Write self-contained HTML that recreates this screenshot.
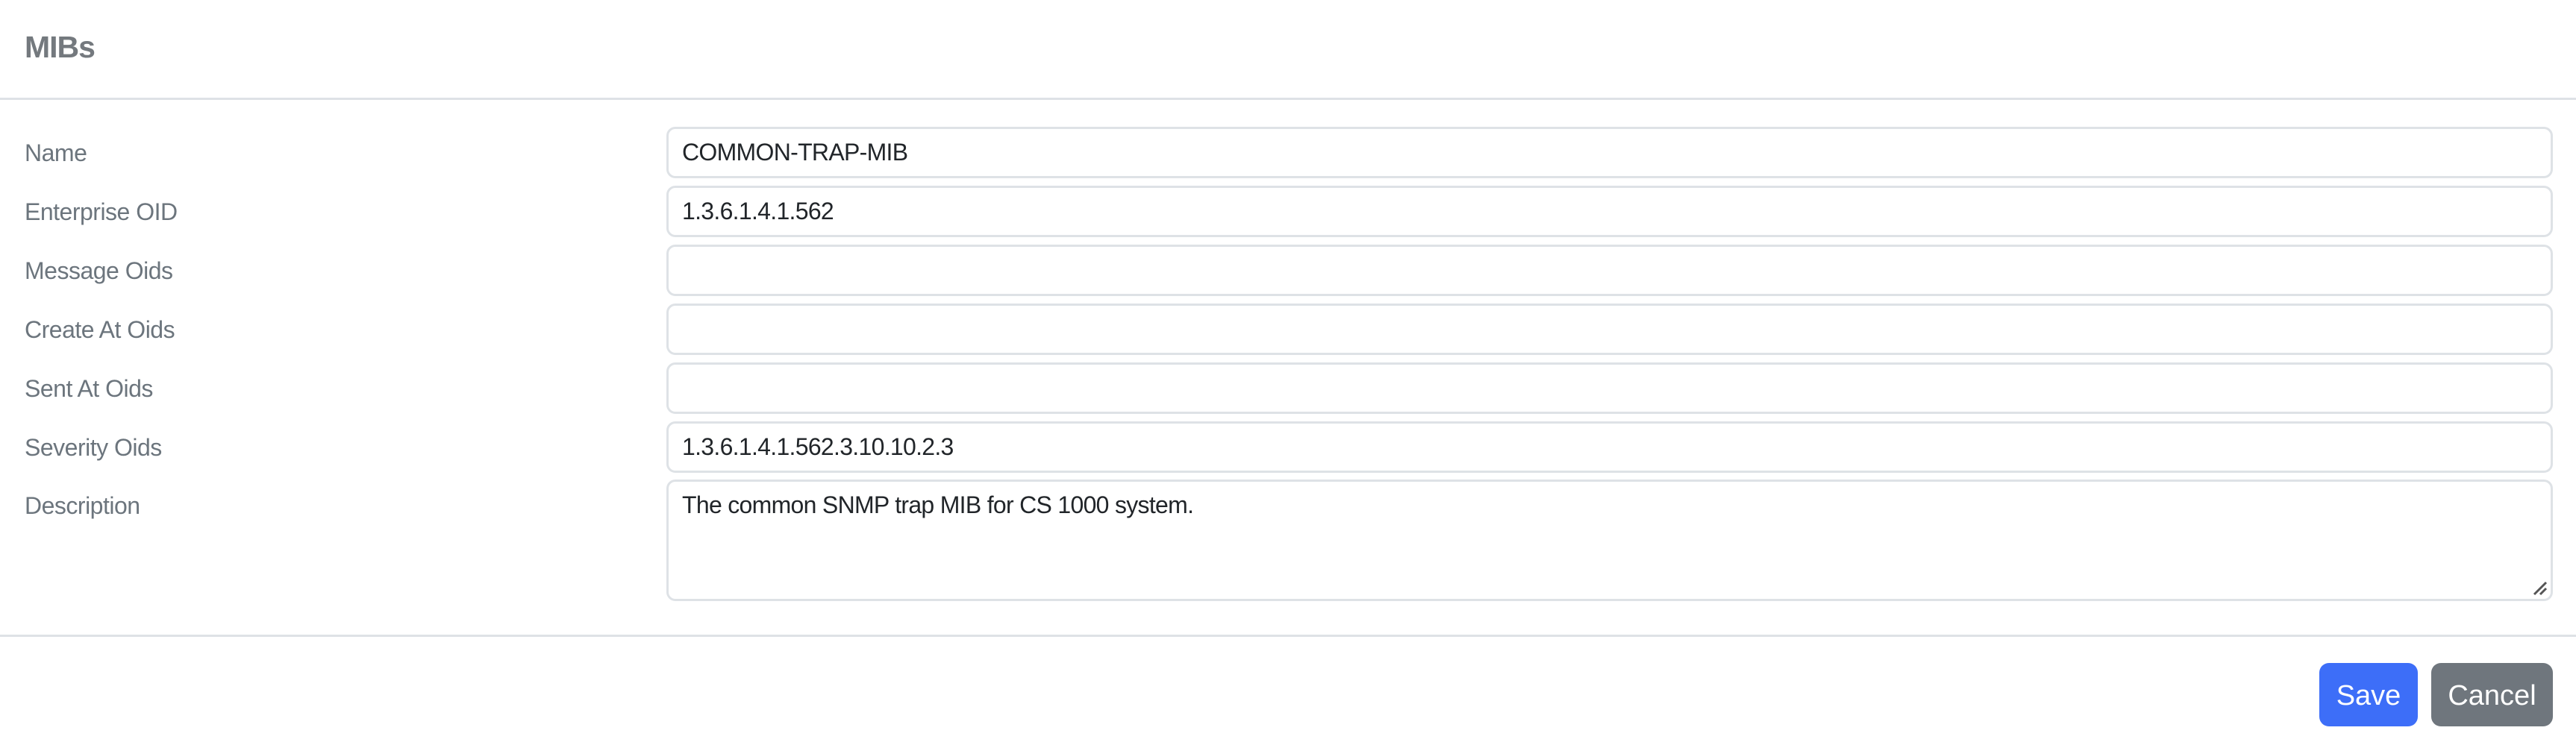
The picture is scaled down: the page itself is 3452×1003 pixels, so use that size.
<!DOCTYPE html>
<html><head><meta charset="utf-8"><style>
html,body{margin:0;padding:0;background:#fff;width:3452px;height:1003px;overflow:hidden;font-family:"Liberation Sans",sans-serif}
.t{position:absolute;left:33px;top:40px;font-size:41px;color:#74797e;font-weight:bold;letter-spacing:-1px}
.hr{position:absolute;left:0;width:3452px;height:3px;background:#dee2e6}
.l{position:absolute;left:33px;font-size:32px;color:#6c757d;letter-spacing:-0.5px}
.i{position:absolute;left:893px;width:2528px;border:3px solid #dee2e6;border-radius:12px;box-sizing:border-box;height:69px;font-size:32px;color:#212529;padding-left:18px;line-height:63px;letter-spacing:-0.7px}
.b{position:absolute;top:889px;height:85px;border-radius:13px;color:#fff;font-size:38px;line-height:89px;text-align:center}
</style></head><body>
<div class="t">MIBs</div>
<div class="hr" style="top:131px"></div>
<div class="l" style="top:187px">Name</div>
<div class="l" style="top:266px">Enterprise OID</div>
<div class="l" style="top:345px">Message Oids</div>
<div class="l" style="top:424px">Create At Oids</div>
<div class="l" style="top:503px">Sent At Oids</div>
<div class="l" style="top:582px">Severity Oids</div>
<div class="l" style="top:660px">Description</div>
<div class="i" style="top:170px">COMMON-TRAP-MIB</div>
<div class="i" style="top:249px">1.3.6.1.4.1.562</div>
<div class="i" style="top:328px"></div>
<div class="i" style="top:407px"></div>
<div class="i" style="top:486px"></div>
<div class="i" style="top:565px">1.3.6.1.4.1.562.3.10.10.2.3</div>
<div class="i" style="top:643px;height:163px;line-height:normal;padding-top:13px">The common SNMP trap MIB for CS 1000 system.
<svg style="position:absolute;right:4px;bottom:4px" width="20" height="20"><path d="M2 18L18 2M10 18L18 10" stroke="#555" stroke-width="3"/></svg></div>
<div class="hr" style="top:851px"></div>
<div class="b" style="left:3108px;width:132px;background:#3d6ef8">Save</div>
<div class="b" style="left:3258px;width:163px;background:#6f767d">Cancel</div>
</body></html>
